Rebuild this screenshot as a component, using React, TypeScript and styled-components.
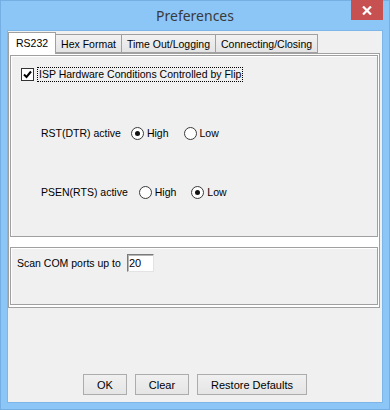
import React from "react";
import styled, {createGlobalStyle} from "styled-components";

const GlobalStyle = createGlobalStyle`
  html, body {
    margin: 0;
    padding: 0;
    background: #8cc6f7;
  }
  * {
    box-sizing: border-box;
  }
`

type RadioProps = {
    checked: boolean
}

const Radio = ({checked}: RadioProps) => (
    <RadioCircle>
        {checked && <RadioDot/>}
    </RadioCircle>
)

type RadioRowProps = {
    label: string
    value: "high" | "low"
    $top: number
    labelGap: number
}

const RadioRow = ({label, value, $top, labelGap}: RadioRowProps) => (
    <Row $top={$top}>
        <Label style={{marginRight: labelGap}}>{label}</Label>
        <Option>
            <Radio checked={value === "high"}/>
            <Label>High</Label>
        </Option>
        <Option>
            <Radio checked={value === "low"}/>
            <Label>Low</Label>
        </Option>
    </Row>
)

export default function App() {
    const tabs = ["RS232", "Hex Format", "Time Out/Logging", "Connecting/Closing"]

    return (
        <>
            <GlobalStyle/>
            <Window>
                <TitleBar>
                    <span/>
                    <Title>Preferences</Title>
                    <CloseButton>
                        <svg width="10" height="9" viewBox="0 0 10 9">
                            <path d="M1 0.5 L9 8.5 M9 0.5 L1 8.5" stroke="#fff" strokeWidth="2.2"/>
                        </svg>
                    </CloseButton>
                </TitleBar>
                <Client>
                    <TabStrip>
                        {tabs.map((t, i) => (
                            <Tab key={t} $active={i === 0}>{t}</Tab>
                        ))}
                    </TabStrip>
                    <TabPanel>
                        <GroupBox $height={182}>
                            <CheckRow>
                                <CheckBox>
                                    <svg width="9" height="9" viewBox="0 0 9 9">
                                        <path d="M1 4.5 L3.5 7 L8 1.5" stroke="#000" strokeWidth="2" fill="none"/>
                                    </svg>
                                </CheckBox>
                                <FocusLabel>ISP Hardware Conditions Controlled by Flip</FocusLabel>
                            </CheckRow>
                            <RadioRow label="RST(DTR) active" value="high" $top={44} labelGap={10}/>
                            <RadioRow label="PSEN(RTS) active" value="low" $top={43} labelGap={11}/>
                        </GroupBox>
                        <GroupBox $height={58}>
                            <ScanRow>
                                <Label>Scan COM ports up to</Label>
                                <NumberField defaultValue="20"/>
                            </ScanRow>
                        </GroupBox>
                    </TabPanel>
                    <ButtonBar>
                        <DialogButton $width={44}>OK</DialogButton>
                        <DialogButton $width={54}>Clear</DialogButton>
                        <DialogButton $width={110}>Restore Defaults</DialogButton>
                    </ButtonBar>
                </Client>
            </Window>
        </>
    )
}

const Window = styled.div`
  width: 390px;
  height: 410px;
  display: flex;
  flex-direction: column;
  background: #8cc6f7;
  border: 1px solid #74aee2;
  font-family: "Liberation Sans", Tahoma, Arial, sans-serif;
  font-size: 10.5px;
  color: #000;
`

const TitleBar = styled.div`
  height: 30px;
  display: grid;
  grid-template-columns: 1fr auto 1fr;
  align-items: start;
`

const Title = styled.div`
  font-family: "Noto Sans", "Open Sans", sans-serif;
  font-size: 14px;
  color: #3a3a3a;
  line-height: 29px;
`

const CloseButton = styled.div`
  justify-self: end;
  width: 32px;
  height: 20px;
  margin-right: 6px;
  margin-top: -1px;
  background: #c75050;
  display: flex;
  align-items: center;
  justify-content: center;
`

const Client = styled.div`
  margin: 0 7px;
  height: 371px;
  background: #f0f0f0;
  box-shadow: 0 0 0 1px #7db6e8;
  display: flex;
  flex-direction: column;
`

const TabStrip = styled.div`
  display: flex;
  align-items: flex-end;
  height: 22px;
  position: relative;
  z-index: 1;
`

const Tab = styled.div<{ $active: boolean }>`
  height: ${p => p.$active ? 22 : 19}px;
  padding: 0 ${p => p.$active ? 7 : 5}px;
  margin-right: -1px;
  margin-bottom: ${p => p.$active ? -1 : 0}px;
  display: flex;
  align-items: center;
  border: 1px solid #a0a0a0;
  border-bottom: ${p => p.$active ? "none" : "1px solid #a0a0a0"};
  background: ${p => p.$active ? "#ffffff" : "linear-gradient(#f2f2f2, #e4e4e4)"};
  padding-bottom: ${p => p.$active ? 2 : 0}px;
`

const TabPanel = styled.div`
  margin-right: 2px;
  height: 255px;
  background: #fff;
  border: 1px solid #a0a0a0;
  padding: 1px 1px 2px 1px;
  display: flex;
  flex-direction: column;
  gap: 10px;
`

const GroupBox = styled.div<{ $height: number }>`
  height: ${p => p.$height}px;
  background: #f0f0f0;
  border: 1px solid #a0a0a0;
  box-shadow: inset 1px 1px 0 #ffffff, 1px 1px 0 #ffffff;
  display: flex;
  flex-direction: column;
`

const CheckRow = styled.div`
  display: flex;
  align-items: center;
  gap: 4px;
  margin: 12px 0 0 10px;
`

const CheckBox = styled.span`
  width: 13px;
  height: 13px;
  border: 1px solid #333;
  background: #fff;
  display: flex;
  align-items: center;
  justify-content: center;
`

const FocusLabel = styled.span`
  outline: 1px dotted #000;
  outline-offset: 0;
  padding: 0 1px;
  line-height: 13px;
`

const Row = styled.div<{ $top: number }>`
  display: flex;
  align-items: center;
  margin: ${p => p.$top}px 0 0 30px;
  height: 16px;
`

const Label = styled.span`
  white-space: nowrap;
`

const Option = styled.span`
  display: flex;
  align-items: center;
  gap: 3px;
  margin-right: 15px;
`

const RadioCircle = styled.span`
  width: 13px;
  height: 13px;
  border-radius: 50%;
  border: 1px solid #3a3a3a;
  background: #fff;
  display: flex;
  align-items: center;
  justify-content: center;
`

const RadioDot = styled.span`
  width: 5px;
  height: 5px;
  border-radius: 50%;
  background: #111;
`

const ScanRow = styled.div`
  display: flex;
  align-items: center;
  gap: 6px;
  margin: 6px 0 0 6px;
`

const NumberField = styled.input`
  width: 27px;
  height: 18px;
  padding: 0 0 0 1px;
  font-family: inherit;
  font-size: 11px;
  color: #000;
  background: #fff;
  border: 1px solid;
  border-color: #7a7a7a #e3e3e3 #e3e3e3 #7a7a7a;
  box-shadow: inset 1px 1px 0 #b5b5b5;
  outline: none;
`

const ButtonBar = styled.div`
  flex: 1;
  display: flex;
  align-items: flex-end;
  justify-content: center;
  gap: 8px;
  padding: 0 0 7px 0;
`

const DialogButton = styled.button<{ $width: number }>`
  width: ${p => p.$width}px;
  height: 21px;
  padding: 0;
  font-family: inherit;
  font-size: 11px;
  color: #000;
  background: linear-gradient(#f0f0f0, #e5e5e5);
  border: 1px solid #acacac;
`
